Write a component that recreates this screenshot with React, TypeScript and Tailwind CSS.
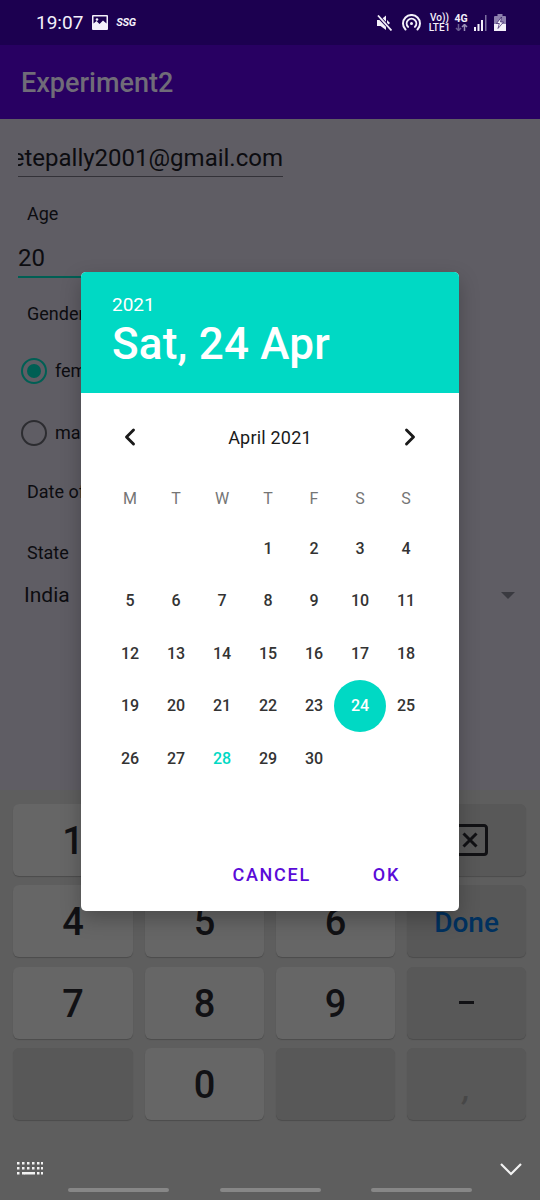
import { ChevronLeft, ChevronRight } from "lucide-react";

const font = { fontFamily: "Roboto, sans-serif" };

const days: (number | null)[] = [
  null, null, null, 1, 2, 3, 4,
  5, 6, 7, 8, 9, 10, 11,
  12, 13, 14, 15, 16, 17, 18,
  19, 20, 21, 22, 23, 24, 25,
  26, 27, 28, 29, 30,
];

const StatusBar = () => (
  <div className="h-[45px] bg-[#1c0050] flex items-center pl-[36px] pr-[34px] text-[#f4f0fa]">
    <span className="text-[19px] leading-none">19:07</span>
    <svg className="ml-[9px]" width="16" height="15" viewBox="0 0 16 15">
      <path fill="#f4f0fa" fillRule="evenodd" d="M1 0h14a1 1 0 0 1 1 1v13a1 1 0 0 1-1 1H1a1 1 0 0 1-1-1V1a1 1 0 0 1 1-1zm.5 1.5v7l3-2.5 3 3 3.500-3.500 3.500 3V1.500z" />
      <circle cx="5" cy="4.500" r="1.300" fill="#f4f0fa" />
    </svg>
    <span className="ml-[8px] text-[11px] font-bold italic leading-none tracking-[-0.3px]">SSG</span>
    <div className="ml-auto flex items-center">
      <svg width="15" height="16" viewBox="0 0 15 16" fill="none">
        <path fill="#f4f0fa" d="M0 5h3.500L9 0.500V15L3.500 11H0z" />
        <path fill="#f4f0fa" d="M10 5l3 3-3 3z" />
        <path stroke="#1c0050" strokeWidth="3.500" d="M0 0l15 15.500" />
        <path stroke="#f4f0fa" strokeWidth="1.800" d="M1 0.500l13.500 15" />
      </svg>
      <svg className="ml-[10px]" width="19" height="17" viewBox="0 0 19 17" fill="none" stroke="#f4f0fa" strokeWidth="2" strokeLinecap="round">
        <path d="M3.500 15.500A8.500 8.500 0 1 1 15.500 15.500" />
        <path d="M6.100 12.900A4.800 4.800 0 1 1 12.900 12.900" />
        <circle cx="9.500" cy="9.500" r="1.500" fill="#f4f0fa" stroke="none" />
      </svg>
      <div className="ml-[9px] w-[19px] flex flex-col items-center text-[10px] leading-[10px] font-medium">
        <span>Vo))</span>
        <span>LTE1</span>
      </div>
      <div className="ml-[6px] w-[12px] flex flex-col items-center">
        <span className="text-[10.500px] leading-[10px] font-bold">4G</span>
        <svg width="13" height="7" viewBox="0 0 13 7" fill="none" strokeWidth="1.500">
          <path stroke="#6a5c92" d="M3.500 0v6M1 4l2.500 2.500L6 4" />
          <path stroke="#9a8fb8" d="M9.500 7V1M7 3l2.500-2.500L12 3" />
        </svg>
      </div>
      <svg className="ml-[7px]" width="13" height="16" viewBox="0 0 13 16">
        <rect x="0" y="12" width="2" height="4" fill="#f4f0fa" />
        <rect x="3.500" y="9" width="2" height="7" fill="#f4f0fa" />
        <rect x="7" y="5" width="2" height="11" fill="#f4f0fa" />
        <rect x="11" y="0" width="1.500" height="16" fill="#7d70a0" />
      </svg>
      <svg className="ml-[7px]" width="12" height="17" viewBox="0 0 12 17">
        <rect x="3.500" y="0" width="5" height="2" fill="#8d80ad" />
        <rect x="0" y="2" width="12" height="15" rx="1" fill="#8d80ad" />
        <rect x="0" y="10" width="12" height="7" fill="#f4f0fa" />
        <path fill="#f4f0fa" stroke="#1c0050" strokeWidth="0.600" d="M7.500 3L2.500 9.500h2.800L4 14.500 9.500 8H6.500z" />
      </svg>
    </div>
  </div>
);

const Key = ({ children, tone = "light", className = "" }: { children?: React.ReactNode; tone?: "light" | "dark"; className?: string }) => (
  <div
    className={`h-[72px] rounded-[6px] flex items-center justify-center shadow-[0_1px_1px_rgba(0,0,0,0.2)] ${
      tone === "light" ? "bg-[#666666]" : "bg-[#585858]"
    } ${className}`}
  >
    {children}
  </div>
);

const Digit = ({ n }: { n: string }) => (
  <Key className="text-[#111114] text-[38px] font-medium pt-[3px]">{n}</Key>
);

const Keyboard = () => (
  <div className="h-[410px] bg-[#5e5e5e] flex flex-col">
    <div className="grid grid-cols-[120px_119px_119px_119px] gap-x-[12px] gap-y-[9.300px] pl-[13px] pt-[14px]">
      <Digit n="1" />
      <Digit n="2" />
      <Digit n="3" />
      <Key tone="dark">
        <svg width="42" height="32" viewBox="0 0 42 32" fill="none" stroke="#111114" strokeWidth="3">
          <path d="M8 1.500h30a2.500 2.500 0 0 1 2.500 2.500v24a2.500 2.500 0 0 1-2.500 2.500H8" strokeLinejoin="round" />
          <path d="M17.500 9.500l13 13M30.500 9.500l-13 13" />
        </svg>
      </Key>
      <Digit n="4" />
      <Digit n="5" />
      <Digit n="6" />
      <Key tone="dark" className="text-[#00315f] text-[28px] font-medium pt-[3px]">Done</Key>
      <Digit n="7" />
      <Digit n="8" />
      <Digit n="9" />
      <Key tone="dark">
        <span className="block w-[15px] h-[3px] bg-[#111114]" />
      </Key>
      <Key tone="dark" />
      <Digit n="0" />
      <Key tone="dark" />
      <Key tone="dark" className="text-[#474747] items-end pb-[8px] text-[30px] font-bold italic">,</Key>
    </div>
    <div className="mt-[42px] h-[15px] flex items-center justify-between pl-[17px] pr-[18px]">
      <svg width="26" height="15" viewBox="0 0 26 15" fill="#f2f2f2">
        {[0, 5, 10].flatMap((y) =>
          [0, 5, 10, 15, 20, 24].map((x) =>
            y === 10 && x > 5 && x < 20 ? null : <rect key={`${x}-${y}`} x={x} y={y} width="2.500" height="2.500" />
          )
        )}
        <rect x="7" y="10" width="11" height="2.500" />
      </svg>
      <svg width="22" height="13" viewBox="0 0 22 13" fill="none" stroke="#f2f2f2" strokeWidth="2.200">
        <path d="M1 1l10 10L21 1" />
      </svg>
    </div>
    <div className="mt-[11px] flex justify-center gap-[50.500px]">
      <div className="w-[101px] h-[4px] rounded-full bg-[#878787]" />
      <div className="w-[101px] h-[4px] rounded-full bg-[#878787]" />
      <div className="w-[101px] h-[4px] rounded-full bg-[#878787]" />
    </div>
  </div>
);

const DatePicker = () => (
  <div className="absolute left-[81px] top-[272px] w-[378px] h-[639px] rounded-[5px] bg-white overflow-hidden flex flex-col shadow-[0_8px_20px_rgba(0,0,0,0.25)]">
    <div className="h-[121px] bg-[#00d9c4] pl-[31px] text-white">
      <div className="pt-[21px] text-[19px] leading-[24px]">2021</div>
      <div className="text-[44px] leading-[54px] font-medium tracking-[0.2px]">Sat, 24 Apr</div>
    </div>
    <div className="h-[90px] pb-[2px] flex items-center justify-between pl-[35px] pr-[35px] text-[#1a1a1a]">
      <ChevronLeft size={28} strokeWidth={2.500} />
      <span className="text-[18px] tracking-[0.2px]">April 2021</span>
      <ChevronRight size={28} strokeWidth={2.500} />
    </div>
    <div className="ml-[26px] w-[322px] pt-[2px] grid grid-cols-7 text-center text-[16px] text-[#757575] h-[30px] items-center">
      {["M", "T", "W", "T", "F", "S", "S"].map((d, i) => (
        <span key={i}>{d}</span>
      ))}
    </div>
    <div className="ml-[26px] mt-[9.500px] w-[322px] grid grid-cols-7 auto-rows-[52.500px] text-center text-[16px] text-[#333333] font-medium">
      {days.map((d, i) => (
        <div key={i} className="flex items-center justify-center">
          {d === 24 ? (
            <span className="shrink-0 w-[52px] h-[52px] rounded-full bg-[#00d9c4] text-white flex items-center justify-center">{d}</span>
          ) : d === 28 ? (
            <span className="text-[#00d9c4]">{d}</span>
          ) : (
            d
          )}
        </div>
      ))}
    </div>
    <div className="mt-auto h-[74px] flex justify-end items-center gap-[62px] pr-[59px] text-[#5a0bd8] text-[18px] font-medium tracking-[1.700px]">
      <span>CANCEL</span>
      <span>OK</span>
    </div>
  </div>
);

export default function App() {
  return (
    <div className="relative w-[540px] h-[1200px] overflow-hidden flex flex-col" style={font}>
      <StatusBar />
      <div className="h-[74px] bg-[#280062] flex items-center pl-[21px] pt-[2px]">
        <span className="text-[27px] font-medium text-[#706c78]">Experiment2</span>
      </div>
      <div className="h-[671px] bg-[#5f5d64] text-[#0c0c10]">
        <div className="ml-[18px] w-[265px] h-[58px] border-b border-[#333238] overflow-hidden flex items-end justify-end pb-[2px]">
          <span className="text-[24px] leading-[32px] whitespace-nowrap">etepally2001@gmail.com</span>
        </div>
        <div className="ml-[27px] mt-[26px] text-[18px] leading-[22px]">Age</div>
        <div className="ml-[18px] mt-[17px] w-[265px] h-[36px] border-b-2 border-[#005f54] text-[24px] leading-[32px]">20</div>
        <div className="ml-[27px] mt-[25px] text-[18px] leading-[22px]">Gender</div>
        <div className="ml-[21px] mt-[33px] flex items-center gap-[8px] text-[18px] leading-[26px]">
          <span className="w-[26px] h-[26px] rounded-full border-2 border-[#005f54] flex items-center justify-center">
            <span className="w-[14px] h-[14px] rounded-full bg-[#005f54]" />
          </span>
          female
        </div>
        <div className="ml-[21px] mt-[36px] flex items-center gap-[8px] text-[18px] leading-[26px]">
          <span className="w-[26px] h-[26px] rounded-full border-2 border-[#2c2c30]" />
          male
        </div>
        <div className="ml-[27px] mt-[35px] text-[18px] leading-[22px]">Date of Birth</div>
        <div className="ml-[27px] mt-[39px] text-[18px] leading-[22px]">State</div>
        <div className="mt-[17px] pl-[24px] pr-[25px] flex items-center justify-between text-[21px] leading-[28px]">
          India
          <span className="w-0 h-0 border-x-[7px] border-x-transparent border-t-[7px] border-t-[#3a3a40]" />
        </div>
      </div>
      <Keyboard />
      <DatePicker />
    </div>
  );
}
